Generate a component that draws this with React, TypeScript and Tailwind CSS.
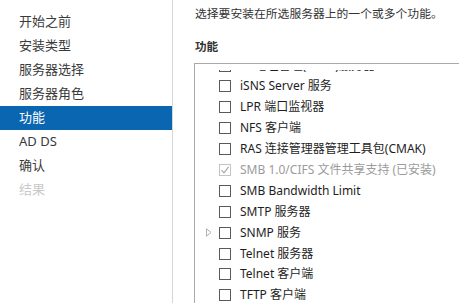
import React from 'react';

const steps = ['开始之前', '安装类型', '服务器选择', '服务器角色', '功能', 'AD DS', '确认', '结果'];

interface Feature {
  label: string;
  installed?: boolean;
  expandable?: boolean;
}

const features: Feature[] = [
  { label: 'IP 地址管理(IPAM)服务器' },
  { label: 'iSNS Server 服务' },
  { label: 'LPR 端口监视器' },
  { label: 'NFS 客户端' },
  { label: 'RAS 连接管理器管理工具包(CMAK)' },
  { label: 'SMB 1.0/CIFS 文件共享支持 (已安装)', installed: true },
  { label: 'SMB Bandwidth Limit' },
  { label: 'SMTP 服务器' },
  { label: 'SNMP 服务', expandable: true },
  { label: 'Telnet 服务器' },
  { label: 'Telnet 客户端' },
  { label: 'TFTP 客户端' },
  { label: 'Windows Biometric Framework' },
];

function CheckBox({ checked, disabled }: { checked?: boolean; disabled?: boolean }) {
  return (
    <span
      className={`w-[12px] h-[12px] shrink-0 border bg-white flex items-center justify-center ${
        disabled ? 'border-[#c4c4c4]' : 'border-[#5a5a5a]'
      }`}
    >
      {checked && (
        <svg width="10" height="10" viewBox="0 0 10 10">
          <path d="M1.5 5.2 L4 7.8 L8.6 1.8" fill="none" stroke="#a8a8a8" strokeWidth="1.2" />
        </svg>
      )}
    </span>
  );
}

export default function App() {
  return (
    <div
      className="w-[459px] h-[303px] overflow-hidden bg-white flex"
      style={{ fontFamily: '"Noto Sans", "Noto Sans CJK SC", sans-serif' }}
    >
      {/* wizard steps */}
      <div className="w-[173px] shrink-0 border-r border-[#d6d6d6] pt-[10px]">
        {steps.map((s, i) => (
          <div
            key={s}
            className={`h-6 flex items-center pl-[19px] text-[13px] ${
              i === 4 ? 'bg-[#0a66b1] text-white' : i === 7 ? 'text-[#c9c9c9]' : 'text-[#3a3a3a]'
            }`}
          >
            {s}
          </div>
        ))}
      </div>

      {/* content */}
      <div className="flex-1 pl-[21px] pt-[5px] flex flex-col">
        <div className="h-[18px] flex items-center pl-[1px] text-[11.8px] text-[#333]">
          选择要安装在所选服务器上的一个或多个功能。
        </div>
        <div className="h-[18px] mt-[15px] flex items-center pl-[1px] text-[11.6px] font-bold text-[#333]">
          功能
        </div>
        <div className="mt-[8px] flex-1 border-l border-t border-[#a9a9a9] flex flex-col">
          {/* scroll viewport, inset from the frame */}
          <div className="mt-[6px] flex-1 overflow-hidden">
            <div className="-mt-[15px]">
              {features.map((f) => (
                <div key={f.label} className="h-[20.9px] flex items-center">
                  <span className="w-[24px] flex justify-center pl-[3px]">
                    {f.expandable && (
                      <svg width="6" height="9" viewBox="0 0 6 9">
                        <path d="M0.5 0.8 L5 4.5 L0.5 8.2 Z" fill="none" stroke="#b0b0b0" strokeWidth="1" />
                      </svg>
                    )}
                  </span>
                  <CheckBox checked={f.installed} disabled={f.installed} />
                  <span
                    className={`ml-[9px] whitespace-nowrap text-[12px] ${
                      f.installed ? 'text-[#9b9b9b]' : 'text-[#1e1e1e]'
                    }`}
                  >
                    {f.label}
                  </span>
                </div>
              ))}
            </div>
          </div>
        </div>
      </div>
    </div>
  );
}
